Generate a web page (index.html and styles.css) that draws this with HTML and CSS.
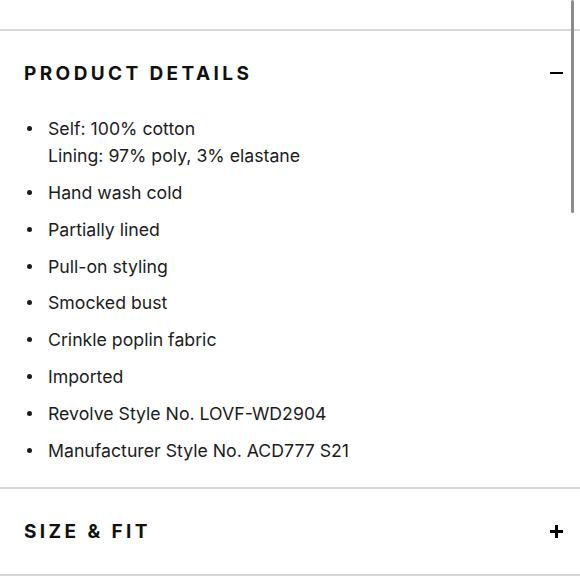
FILE: index.html
```html
<!DOCTYPE html>
<html>
<head>
<meta charset="utf-8">
<link rel="stylesheet" href="styles.css">
</head>
<body>
<div class="page">
  <div class="top"></div>
  <section class="acc">
    <div class="acc-head">
      <h2 class="acc-title">PRODUCT DETAILS</h2>
      <span class="icon minus"></span>
    </div>
    <ul class="details">
      <li>Self: 100% cotton<br>Lining: 97% poly, 3% elastane</li>
      <li>Hand wash cold</li>
      <li>Partially lined</li>
      <li>Pull-on styling</li>
      <li>Smocked bust</li>
      <li>Crinkle poplin fabric</li>
      <li>Imported</li>
      <li>Revolve Style No. LOVF-WD2904</li>
      <li>Manufacturer Style No. ACD777 S21</li>
    </ul>
  </section>
  <section class="acc closed">
    <div class="acc-head">
      <h2 class="acc-title">SIZE &amp; FIT</h2>
      <span class="icon plus"></span>
    </div>
  </section>
  <div class="scrollbar"></div>
</div>
</body>
</html>
```
FILE: styles.css
```css
html, body {
  margin: 0;
  padding: 0;
  background: #fff;
}
.page {
  position: relative;
  width: 580px;
  height: 580px;
  overflow: hidden;
  font-family: "Inter", "Noto Sans", sans-serif;
  color: #1a1a1a;
}
.top {
  height: 29px;
  border-bottom: 2px solid #d6d6d6;
}
.acc {
  border-bottom: 2px solid #d6d6d6;
}
.acc-head {
  height: 84px;
  display: flex;
  align-items: center;
  justify-content: space-between;
  padding: 0 17px 0 24px;
}
.closed .acc-head {
  height: 85px;
}
.acc-title {
  margin: 0;
  font-size: 19px;
  font-weight: 700;
  letter-spacing: 3.4px;
  color: #111;
}
.icon {
  position: relative;
  width: 13px;
  height: 13px;
}
.icon::before,
.icon::after {
  content: "";
  position: absolute;
  background: #000;
}
.icon::before {
  left: 0;
  right: 0;
  top: 5.5px;
  height: 2.4px;
}
.plus::after {
  top: 0;
  bottom: 0;
  left: 5.3px;
  width: 2.4px;
}
.minus::after {
  display: none;
}
.details {
  list-style: none;
  margin: 0;
  padding: 0 24px 23px 48px;
  display: flex;
  flex-direction: column;
  gap: 9.85px;
  font-size: 17.7px;
  line-height: 27px;
  color: #1c1c1c;
}
.details li {
  position: relative;
}
.details li::before {
  content: "";
  position: absolute;
  left: -21px;
  top: 11px;
  width: 5px;
  height: 5px;
  border-radius: 50%;
  background: #1c1c1c;
}
.scrollbar {
  position: absolute;
  top: 0;
  right: 6px;
  width: 3px;
  height: 213px;
  border-radius: 2px;
  background: #8c8c8c;
}
```
